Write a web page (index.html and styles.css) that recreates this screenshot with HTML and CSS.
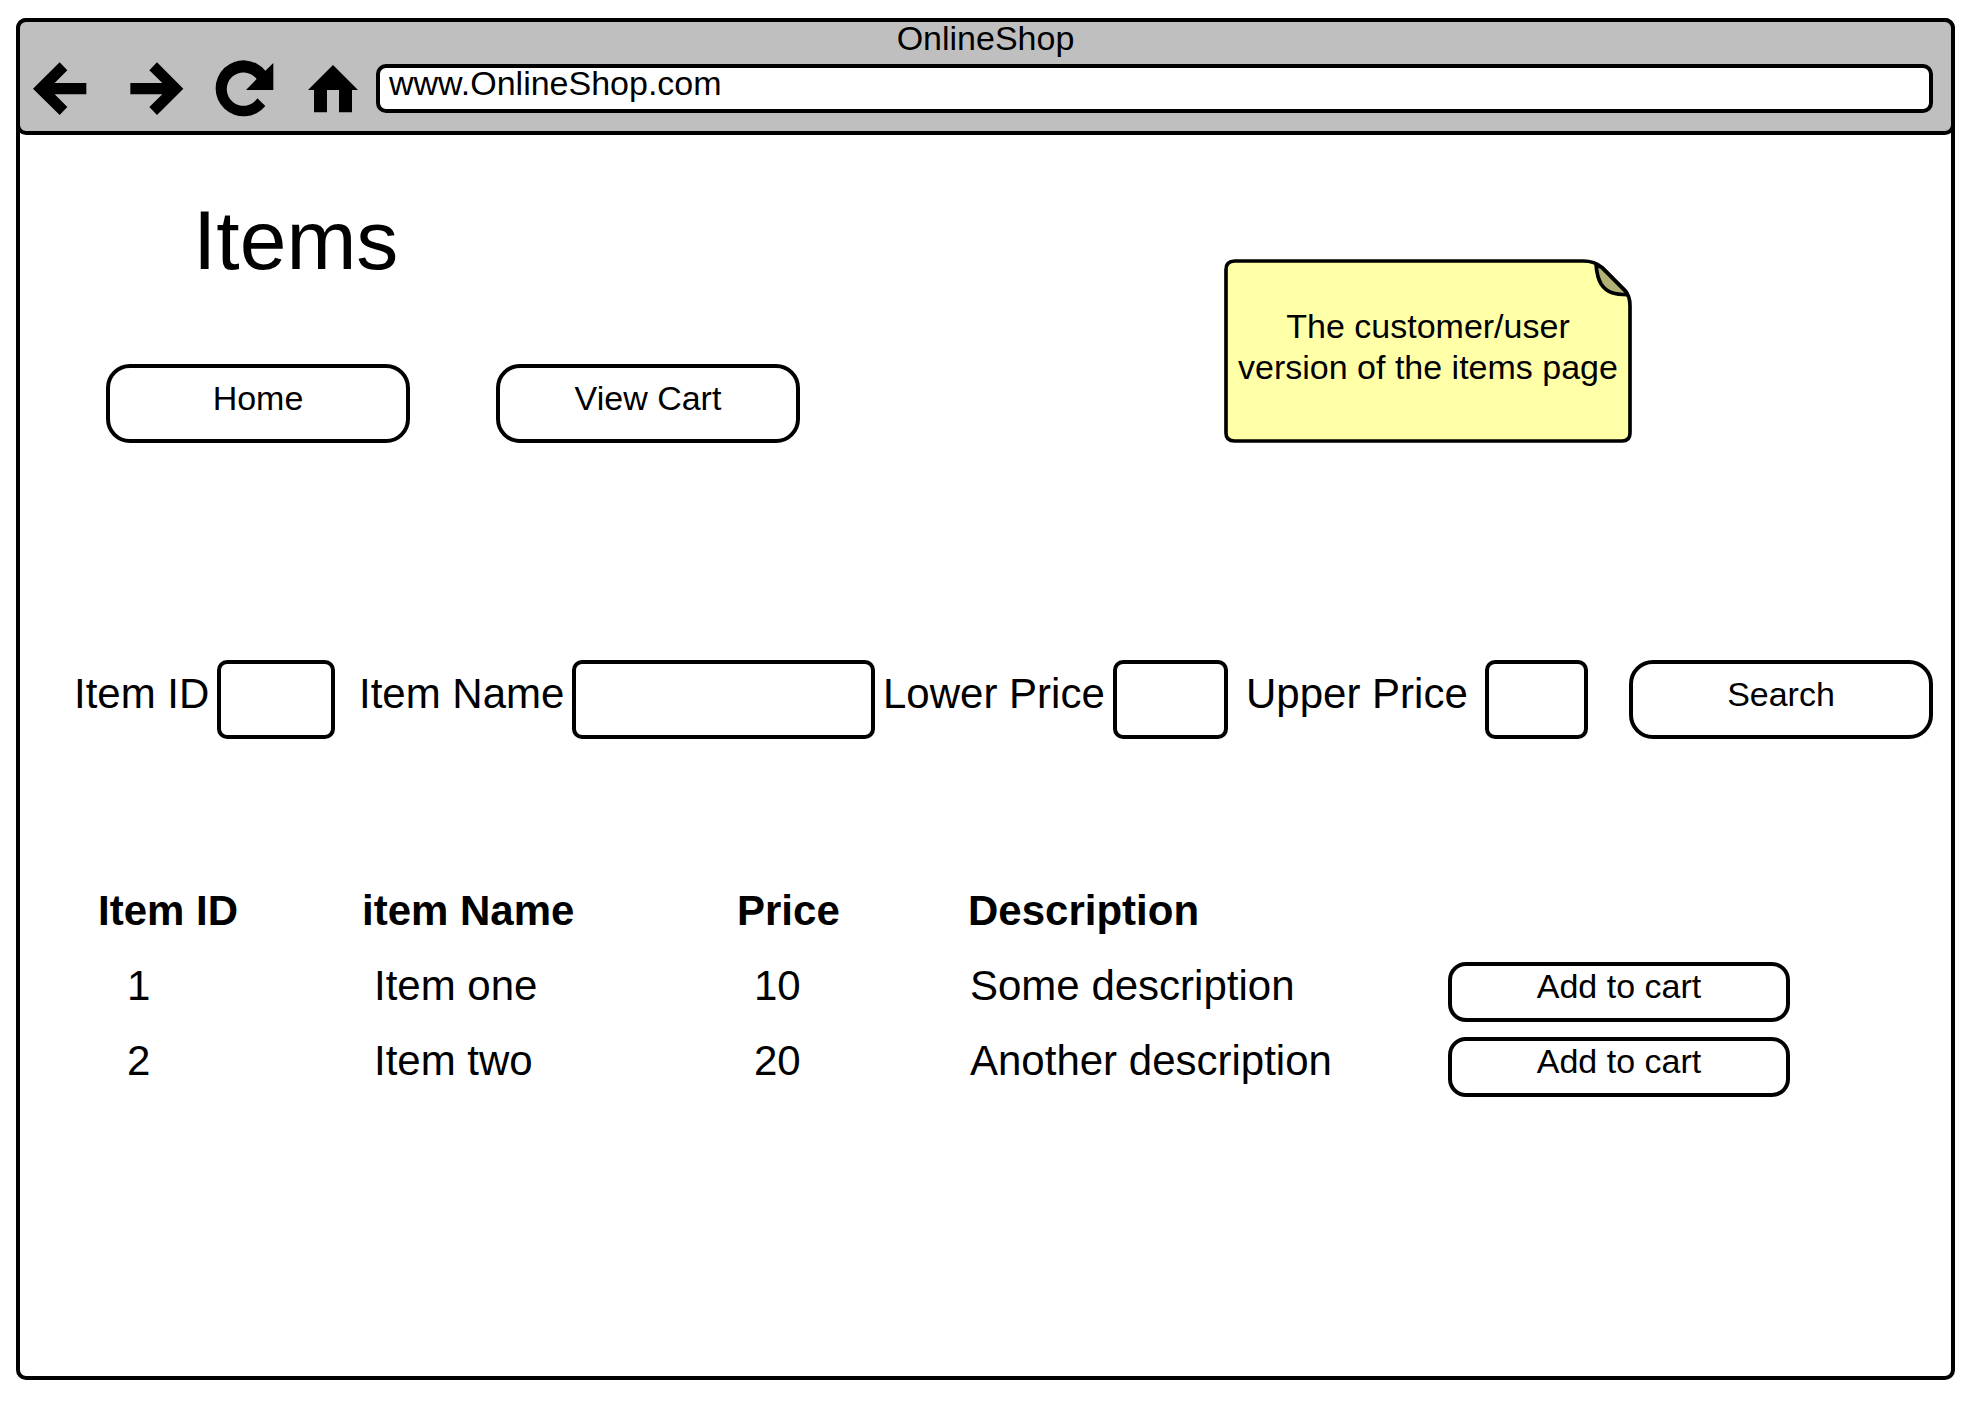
FILE: index.html
```html
<!DOCTYPE html>
<html lang="en">
<head>
<meta charset="utf-8">
<meta name="viewport" content="width=device-width, initial-scale=1">
<title>OnlineShop</title>
<link rel="stylesheet" href="styles.css">
</head>
<body>
<div class="window">
  <header class="chrome">
    <div class="chrome-title">OnlineShop</div>
    <div class="toolbar">
      <nav class="nav-buttons" aria-label="Browser">
        <button type="button" class="icon-button" aria-label="Back">
          <svg width="54" height="53" viewBox="98 184 162 159"><path d="M98 264 178 185 201 209 163 247H258V281H163L201 319 178 343Z"/></svg>
        </button>
        <button type="button" class="icon-button" aria-label="Forward">
          <svg width="54" height="53" viewBox="390 184 162 159"><path d="M550 264 471 185 448 209 487 247H391V281H487L448 319 471 343Z"/></svg>
        </button>
        <button type="button" class="icon-button" aria-label="Reload">
          <svg width="59" height="57" viewBox="644 178 177 171"><path d="M795 316A84 84 0 1 1 795 210L819 187V268H737L769 235A50 50 0 1 0 771 293Z"/></svg>
        </button>
        <button type="button" class="icon-button" aria-label="Home page">
          <svg width="50" height="48" viewBox="924 192 150 144"><path d="M999 192 1074 267H1056V334H1017V267H981V334H942V267H924Z"/></svg>
        </button>
      </nav>
      <input class="address" type="text" aria-label="Address" value="www.OnlineShop.com">
    </div>
  </header>

  <main class="page">
    <section class="intro">
      <div class="intro-main">
        <h1 class="title">Items</h1>
        <div class="actions">
          <button type="button" class="button">Home</button>
          <button type="button" class="button">View Cart</button>
        </div>
      </div>
      <aside class="note">
        <svg class="note-shape" viewBox="70 55 1227 552" preserveAspectRatio="none" aria-hidden="true">
          <path class="note-paper" d="M102 61H1150Q1185 61 1206 80L1275 149Q1291 165 1291 195V577Q1291 601 1267 601H102Q76 601 76 577V87Q76 61 102 61Z"/>
          <path class="note-fold" d="M1189 73Q1192 110 1204 130Q1217 150 1237 156Q1253 161 1283 162L1278 152 1206 80Z"/>
        </svg>
        <p class="note-text">The customer/user version of the items page</p>
      </aside>
    </section>

    <form class="search">
      <div class="field field-id">
        <label for="item-id">Item ID</label>
        <input id="item-id" type="text">
      </div>
      <div class="field field-name">
        <label for="item-name">Item Name</label>
        <input id="item-name" type="text">
      </div>
      <div class="field field-lower">
        <label for="lower-price">Lower Price</label>
        <input id="lower-price" type="text">
      </div>
      <div class="field field-upper">
        <label for="upper-price">Upper Price</label>
        <input id="upper-price" type="text">
      </div>
      <button type="button" class="button">Search</button>
    </form>

    <table class="items">
      <colgroup>
        <col class="col-id"><col class="col-name"><col class="col-price"><col class="col-description"><col class="col-action">
      </colgroup>
      <thead>
        <tr><th scope="col">Item ID</th><th scope="col">item Name</th><th scope="col">Price</th><th scope="col">Description</th><td></td></tr>
      </thead>
      <tbody>
        <tr>
          <td class="cell-id">1</td><td class="cell-name">Item one</td><td class="cell-price">10</td><td class="cell-description">Some description</td>
          <td class="cell-action"><button type="button" class="button button-small">Add to cart</button></td>
        </tr>
        <tr>
          <td class="cell-id">2</td><td class="cell-name">Item two</td><td class="cell-price">20</td><td class="cell-description">Another description</td>
          <td class="cell-action"><button type="button" class="button button-small">Add to cart</button></td>
        </tr>
      </tbody>
    </table>
  </main>
</div>
</body>
</html>
```
FILE: styles.css
```css
*,
*::before,
*::after {
  box-sizing: border-box;
}

body {
  margin: 0;
  padding: 18px 18px 21px 16px;
  background: #fff;
  color: #000;
  font-family: "Liberation Sans", Arial, sans-serif;
  font-size: 34px;
}

button,
input {
  margin: 0;
  color: inherit;
  font: inherit;
}

.window {
  min-height: calc(100vh - 39px);
  border: 4px solid #000;
  border-radius: 10px;
}

/* Browser bar */
.chrome {
  margin: -4px -4px 0;
  border: 4px solid #000;
  border-radius: 10px;
  background: #bfbfbf;
}

.chrome-title {
  line-height: 32px;
  text-align: center;
}

.toolbar {
  display: flex;
  align-items: center;
  padding: 6px 18px 14px 13px;
}

.nav-buttons {
  display: grid;
  grid-template-columns: 97px 85px 93px 68px;
  align-items: center;
}

.icon-button {
  display: flex;
  padding: 0;
  border: 0;
  background: none;
}

.address {
  flex: 1;
  min-width: 0;
  height: 49px;
  padding: 0 9px 10px;
  border: 4px solid #000;
  border-radius: 10px;
  background: #fff;
}

/* Page */
.page {
  padding: 63px 18px 0 54px;
}

.intro {
  display: flex;
  justify-content: space-between;
  align-items: flex-end;
  padding: 0 301px 0 32px;
}

.title {
  margin: 0 0 82px;
  padding-left: 87px;
  font-size: 84px;
  font-weight: 400;
  line-height: 84px;
}

.actions {
  display: flex;
  gap: 86px;
}

.button {
  width: 304px;
  height: 79px;
  padding: 0 0 10px;
  border: 4px solid #000;
  border-radius: 24px;
  background: #fff;
}

.note {
  position: relative;
  display: flex;
  align-items: center;
  width: 408px;
  min-height: 184px;
  padding: 0 12px 8px;
}

.note-shape {
  position: absolute;
  inset: 0;
  width: 100%;
  height: 100%;
}

.note-paper,
.note-fold {
  stroke: #000;
  stroke-width: 11;
  stroke-linejoin: round;
}

.note-paper {
  fill: #ffffa8;
}

.note-fold {
  fill: #b2b276;
}

.note-text {
  position: relative;
  margin: 0;
  line-height: 41px;
  text-align: center;
}

/* Search */
.search {
  display: grid;
  grid-template-columns: 285fr 524fr 363fr 383fr 304fr;
  margin-top: 217px;
}

.search .button {
  width: 100%;
}

.field {
  display: flex;
  align-items: center;
  gap: 8px;
  min-width: 0;
  font-size: 42px;
}

.field label {
  flex: none;
  padding-bottom: 11px;
}

.field input {
  flex: 1;
  width: 0;
  min-width: 0;
  height: 79px;
  padding: 0 8px;
  border: 4px solid #000;
  border-radius: 10px;
  background: #fff;
}

.field-id {
  padding-right: 24px;
}

.field-name {
  padding-right: 8px;
}

.field-lower {
  padding-right: 18px;
}

.field-upper {
  gap: 17px;
  padding-right: 41px;
}

/* Items */
.items {
  width: calc(100% - 167px);
  margin: 140px 143px 0 24px;
  border-collapse: collapse;
  table-layout: fixed;
  font-size: 42px;
}

.col-id {
  width: 264px;
}

.col-name {
  width: 375px;
}

.col-price {
  width: 231px;
}

.col-description {
  width: 480px;
}

.col-action {
  width: 342px;
}

.items th,
.items td {
  height: 75px;
  padding: 0 0 12px;
  text-align: left;
  vertical-align: middle;
  white-space: nowrap;
}

.items .cell-id {
  padding-left: 29px;
}

.items .cell-name {
  padding-left: 12px;
}

.items .cell-price {
  padding-left: 17px;
}

.items .cell-description {
  padding-left: 2px;
}

.items .cell-action {
  padding: 0;
}

.button-small {
  display: block;
  width: 100%;
  height: 60px;
  border-radius: 18px;
  font-size: 34px;
}
```
